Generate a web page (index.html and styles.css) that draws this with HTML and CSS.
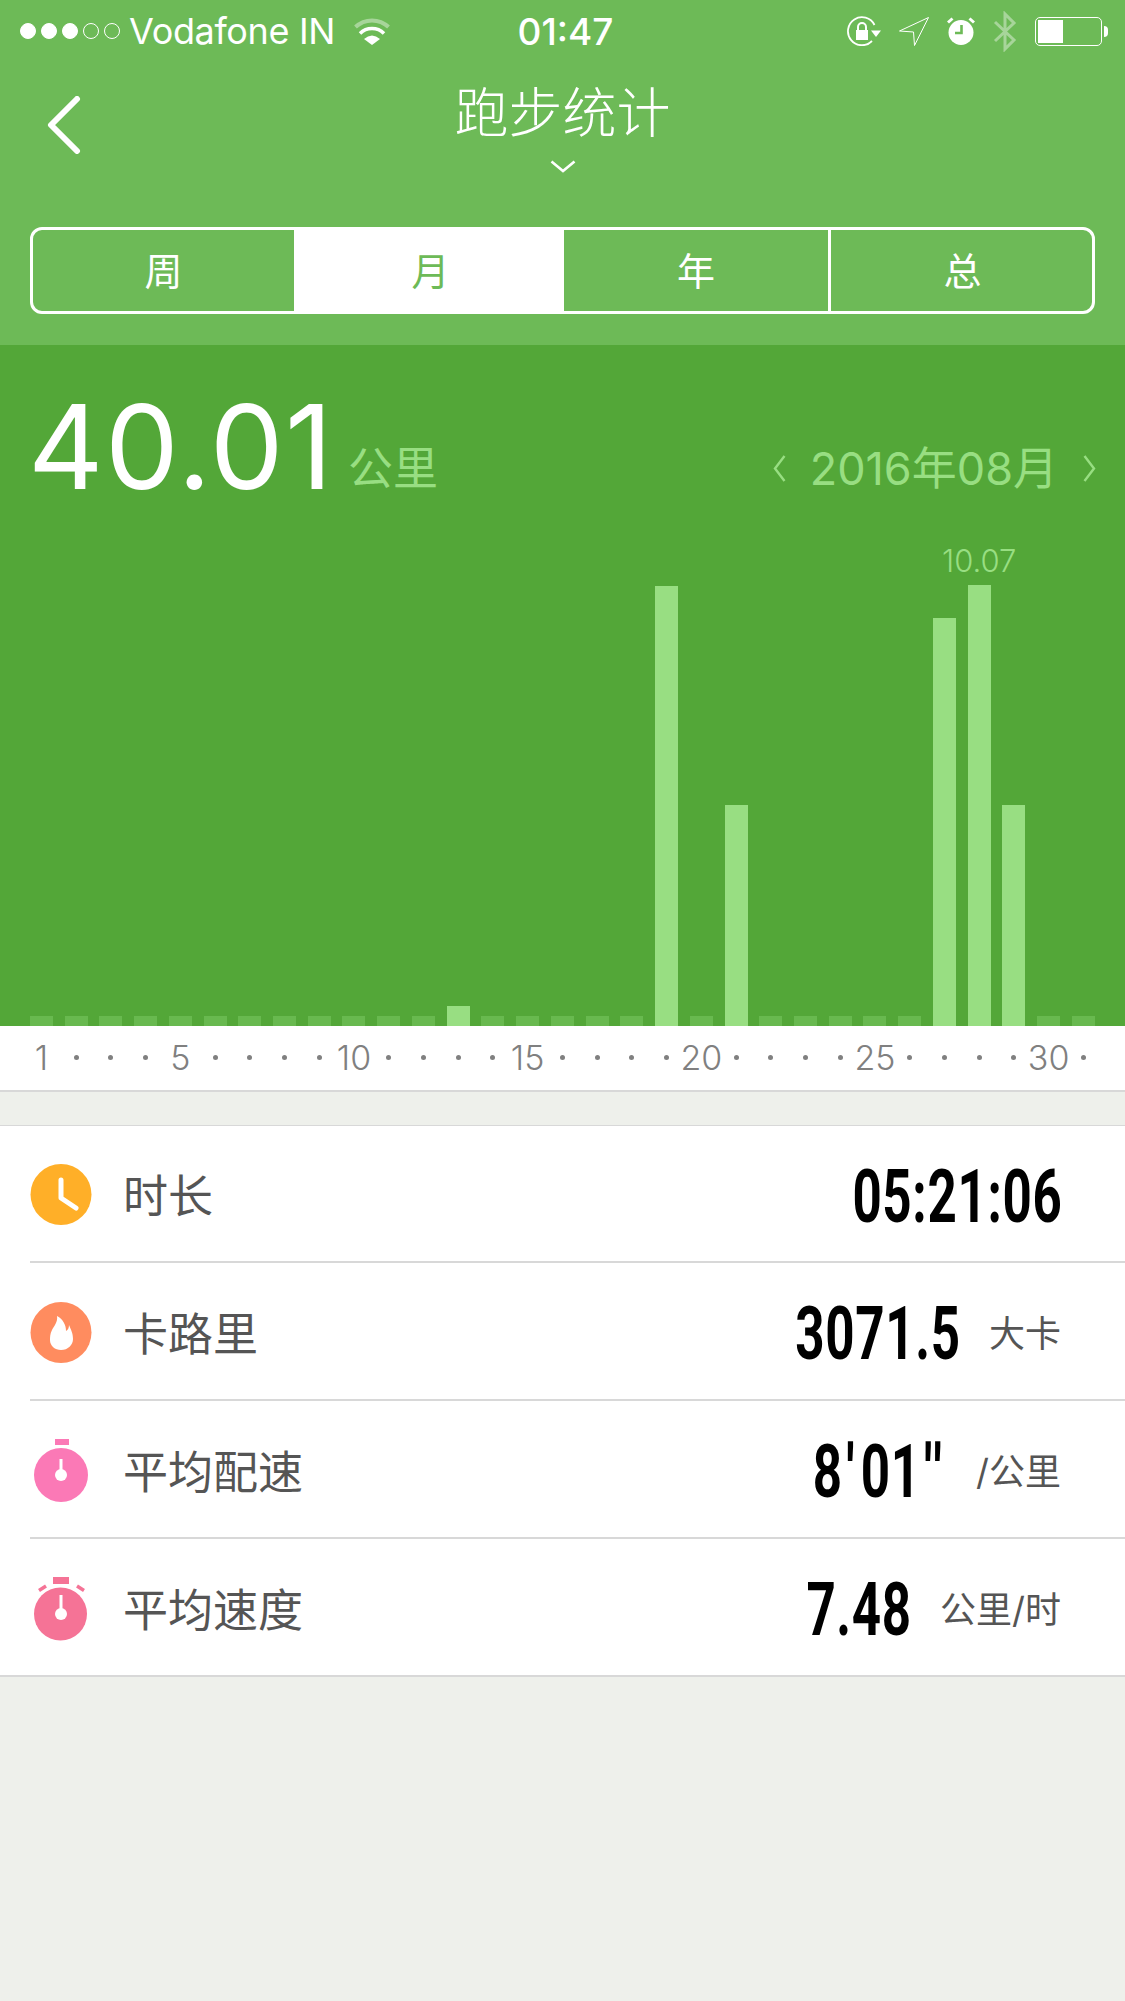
FILE: index.html
```html
<!DOCTYPE html>
<html lang="zh-CN">
<head>
  <meta charset="UTF-8">
  <meta name="viewport" content="width=device-width, initial-scale=1.0">
  <title>跑步统计</title>
  <link rel="stylesheet" href="styles.css">
</head>
<body>
  <header class="top">
    <div class="status-bar">
      <div class="status-left">
        <div class="signal">
          <span class="dot on"></span><span class="dot on"></span><span class="dot on"></span><span class="dot"></span><span class="dot"></span>
        </div>
        <span class="carrier">Vodafone IN</span>
        <svg class="wifi" width="36" height="27" viewBox="0 0 36 27">
          <path d="M1.5 9 A24 24 0 0 1 34.5 9" fill="none" stroke="#fff" stroke-width="4" opacity="0.4"/>
          <path d="M6 15.5 A17 17 0 0 1 30 15.5" fill="none" stroke="#fff" stroke-width="3.5"/>
          <path d="M10 21 Q18 14 26 21 L18 27 Z" fill="#fff"/>
        </svg>
      </div>
      <div class="time">01:47</div>
      <div class="status-right">
        <svg width="34" height="30" viewBox="0 0 34 30">
          <path d="M27.5 9 A14 14 0 1 0 25 25" fill="none" stroke="#fff" stroke-width="1.8"/>
          <path d="M24 14.5 L34 14.5 L29 21 Z" fill="#fff"/>
          <rect x="9" y="14" width="12" height="10" fill="#fff"/>
          <path d="M11 14 V11 A4 4 0 0 1 19 11 V14" fill="none" stroke="#fff" stroke-width="2"/>
        </svg>
        <svg width="30" height="29" viewBox="0 0 30 29">
          <path d="M29.5 0.5 L0.5 14 L14.5 15 L15.5 28.5 Z" fill="none" stroke="#fff" stroke-width="1"/>
        </svg>
        <svg width="28" height="28" viewBox="0 0 28 28">
          <circle cx="14" cy="15.5" r="12.5" fill="#fff"/>
          <path d="M1 5.5 L5.5 1.5 M27 5.5 L22.5 1.5" stroke="#fff" stroke-width="3"/>
          <path d="M14.5 8 V16 H8" fill="none" stroke="#6dba57" stroke-width="2.6"/>
        </svg>
        <svg width="24" height="41" viewBox="0 0 24 41">
          <path d="M2 11 L21 29 L12 38 V3 L21 12 L2 30" fill="none" stroke="#fff" stroke-width="3" opacity="0.4"/>
        </svg>
        <div class="battery-wrap">
          <div class="battery"><div class="battery-fill"></div></div>
          <div class="battery-tip"></div>
        </div>
      </div>
    </div>

    <div class="nav">
      <svg class="back" width="34" height="58" viewBox="0 0 34 58">
        <path d="M30 3 L4 29 L30 55" fill="none" stroke="#fff" stroke-width="6" stroke-linecap="round" stroke-linejoin="round"/>
      </svg>
      <div class="title-wrap">
        <h1 class="title">跑步统计</h1>
        <svg class="title-arrow" width="26" height="13" viewBox="0 0 26 13">
          <path d="M1.5 1.5 L13 11 L24.5 1.5" fill="none" stroke="#fff" stroke-width="2.6"/>
        </svg>
      </div>
    </div>

    <div class="seg">
      <div class="seg-item seg-week">周</div>
      <div class="seg-item seg-month active">月</div>
      <div class="seg-item seg-year">年</div>
      <div class="seg-item seg-all">总</div>
    </div>
  </header>

  <section class="chart">
    <div class="summary">
      <span class="total">40.01</span>
      <span class="total-unit">公里</span>
      <div class="period">
        <svg width="13" height="27" viewBox="0 0 13 27">
          <path d="M11.5 1 L2 13.5 L11.5 26" fill="none" stroke="#98de82" stroke-width="2.4"/>
        </svg>
        <span class="period-text">2016年08月</span>
        <svg width="13" height="27" viewBox="0 0 13 27">
          <path d="M1.5 1 L11 13.5 L1.5 26" fill="none" stroke="#98de82" stroke-width="2.4"/>
        </svg>
      </div>
    </div>
    <div class="bars">
      <div class="col"><div class="bar none"></div></div>
      <div class="col"><div class="bar none"></div></div>
      <div class="col"><div class="bar none"></div></div>
      <div class="col"><div class="bar none"></div></div>
      <div class="col"><div class="bar none"></div></div>
      <div class="col"><div class="bar none"></div></div>
      <div class="col"><div class="bar none"></div></div>
      <div class="col"><div class="bar none"></div></div>
      <div class="col"><div class="bar none"></div></div>
      <div class="col"><div class="bar none"></div></div>
      <div class="col"><div class="bar none"></div></div>
      <div class="col"><div class="bar none"></div></div>
      <div class="col"><div class="bar" style="height:20px"></div></div>
      <div class="col"><div class="bar none"></div></div>
      <div class="col"><div class="bar none"></div></div>
      <div class="col"><div class="bar none"></div></div>
      <div class="col"><div class="bar none"></div></div>
      <div class="col"><div class="bar none"></div></div>
      <div class="col"><div class="bar" style="height:440px"></div></div>
      <div class="col"><div class="bar none"></div></div>
      <div class="col"><div class="bar" style="height:221px"></div></div>
      <div class="col"><div class="bar none"></div></div>
      <div class="col"><div class="bar none"></div></div>
      <div class="col"><div class="bar none"></div></div>
      <div class="col"><div class="bar none"></div></div>
      <div class="col"><div class="bar none"></div></div>
      <div class="col"><div class="bar" style="height:408px"></div></div>
      <div class="col"><div class="bar" style="height:441px"><span class="bar-label">10.07</span></div></div>
      <div class="col"><div class="bar" style="height:221px"></div></div>
      <div class="col"><div class="bar none"></div></div>
      <div class="col"><div class="bar none"></div></div>
    </div>
  </section>

  <div class="axis">
    <div class="tick">1</div><div class="tick"><i></i></div><div class="tick"><i></i></div><div class="tick"><i></i></div>
    <div class="tick">5</div><div class="tick"><i></i></div><div class="tick"><i></i></div><div class="tick"><i></i></div><div class="tick"><i></i></div>
    <div class="tick">10</div><div class="tick"><i></i></div><div class="tick"><i></i></div><div class="tick"><i></i></div><div class="tick"><i></i></div>
    <div class="tick">15</div><div class="tick"><i></i></div><div class="tick"><i></i></div><div class="tick"><i></i></div><div class="tick"><i></i></div>
    <div class="tick">20</div><div class="tick"><i></i></div><div class="tick"><i></i></div><div class="tick"><i></i></div><div class="tick"><i></i></div>
    <div class="tick">25</div><div class="tick"><i></i></div><div class="tick"><i></i></div><div class="tick"><i></i></div><div class="tick"><i></i></div>
    <div class="tick">30</div><div class="tick"><i></i></div>
  </div>

  <div class="list">
    <div class="row">
      <svg class="row-icon" width="64" height="72" viewBox="0 0 64 72">
        <circle cx="31" cy="36.5" r="30.5" fill="#ffaf28"/>
        <path d="M31 22 V40 L46 50" fill="none" stroke="#fff" stroke-width="5" stroke-linecap="round" stroke-linejoin="round"/>
      </svg>
      <span class="row-label">时长</span>
      <span class="value">05:21:06</span>
    </div>
    <div class="row">
      <svg class="row-icon" width="64" height="72" viewBox="0 0 64 72">
        <circle cx="31" cy="37.5" r="30.5" fill="#ff8c5f"/>
        <path d="M27 21 C28 27 24 31 22 35 C20 39 20 42 20 45 C20 51 25 55 31 55 C38 55 43 50 43 44 C43 38 41 35 39 30 C39 33 38 35 36 36 C36 30 33 24 27 21 Z" fill="#fff"/>
      </svg>
      <span class="row-label">卡路里</span>
      <span class="value">3071.5</span>
      <span class="unit">大卡</span>
    </div>
    <div class="row">
      <svg class="row-icon" width="64" height="72" viewBox="0 0 64 72">
        <rect x="25" y="6" width="14" height="6" fill="#fb79b6"/>
        <circle cx="31" cy="42" r="27" fill="#fb79b6"/>
        <rect x="29.5" y="26" width="3" height="16" fill="#fff"/>
        <circle cx="31" cy="42" r="6" fill="#fff"/>
      </svg>
      <span class="row-label">平均配速</span>
      <span class="value">8<span class="prime">'</span>01<span class="prime">''</span></span>
      <span class="unit">/公里</span>
    </div>
    <div class="row">
      <svg class="row-icon" width="64" height="72" viewBox="0 0 64 72">
        <rect x="23" y="6" width="16" height="7" fill="#f57396"/>
        <path d="M9 19.5 L16 15 M47 15 L54 19.5" stroke="#f57396" stroke-width="3.5"/>
        <circle cx="30.5" cy="43" r="26.5" fill="#f57396"/>
        <rect x="29.5" y="24" width="3" height="19" fill="#fff"/>
        <circle cx="31" cy="43" r="6" fill="#fff"/>
      </svg>
      <span class="row-label">平均速度</span>
      <span class="value">7.48</span>
      <span class="unit">公里/时</span>
    </div>
  </div>
</body>
</html>
```

FILE: styles.css
```css
* {
  box-sizing: border-box;
}
body {
  margin: 0;
  min-height: 2001px;
  background-color: #eef0eb;
  font-family: Inter, "Noto Sans CJK SC", sans-serif;
  overflow-x: hidden;
}

/* top green part */
.top {
  height: 345px;
  background-color: #6dba57;
  color: white;
}
.status-bar {
  height: 60px;
  padding-top: 2px;
  display: grid;
  grid-template-columns: 1fr auto 1fr;
  align-items: center;
  font-size: 36px;
}
.status-left {
  display: flex;
  align-items: center;
  padding-left: 20px;
}
.signal {
  display: flex;
  gap: 5px;
}
.dot {
  width: 16px;
  height: 16px;
  border-radius: 50%;
  border: 1px solid white;
}
.dot.on {
  background-color: white;
}
.carrier {
  margin-left: 9px;
  letter-spacing: -0.35px;
}
.wifi {
  margin-left: 19px;
}
.time {
  font-size: 37px;
  font-weight: 500;
  padding-left: 6px;
}
.status-right {
  display: flex;
  align-items: center;
  justify-content: flex-end;
  gap: 18px;
  padding-right: 17px;
}
.battery-wrap {
  display: flex;
  align-items: center;
  gap: 2px;
}
.battery {
  width: 67px;
  height: 29px;
  border: 1px solid white;
  border-radius: 5px;
  padding: 2px;
}
.battery-fill {
  width: 25px;
  height: 100%;
  background-color: white;
}
.battery-tip {
  width: 4px;
  height: 11px;
  background-color: white;
  border-radius: 0 4px 4px 0;
}

.nav {
  display: grid;
  grid-template-columns: 1fr auto 1fr;
  margin-top: 27px;
  padding-left: 47px;
}
.back {
  margin-top: 9px;
}
.title-wrap {
  display: flex;
  flex-direction: column;
  align-items: center;
}
.title {
  margin: 0;
  font-size: 54px;
  line-height: 54px;
  font-weight: 300;
  margin-left: -47px;
}
.title-arrow {
  margin-top: 19px;
  margin-left: -47px;
}

.seg {
  display: flex;
  height: 87px;
  margin: 54px 30px 0 30px;
  border: 3px solid white;
  border-radius: 12px;
  overflow: hidden;
  font-size: 38px;
}
.seg-item {
  display: flex;
  align-items: center;
  justify-content: center;
  padding-bottom: 5px;
}
.seg-week {
  flex: 0 0 261px;
}
.seg-month {
  flex: 0 0 270px;
  padding-left: 3px;
}
.seg-year {
  flex: 0 0 267px;
  border-right: 3px solid white;
}
.seg-all {
  flex: 1;
  padding-left: 2px;
}
.seg-item.active {
  background-color: white;
  color: #6dba57;
}

/* chart */
.chart {
  height: 681px;
  background-color: #53a738;
  display: flex;
  flex-direction: column;
}
.summary {
  display: flex;
  align-items: flex-end;
  padding: 44px 29px 0 28px;
  color: #98de82;
}
.total {
  font-size: 117px;
  line-height: 115px;
  font-weight: 400;
  letter-spacing: 1.5px;
  color: white;
}
.total-unit {
  font-size: 45px;
  line-height: 45px;
  margin: 0 0 13px 14px;
}
.period {
  display: flex;
  align-items: center;
  margin: 0 0 13px auto;
  font-size: 45px;
  line-height: 45px;
}
.period-text {
  margin: 0 25px 0 24px;
}
.bars {
  flex: 1;
  display: flex;
  align-items: flex-end;
  padding: 0 24px;
}
.col {
  flex: 1 1 0;
  display: flex;
  justify-content: center;
}
.bar {
  position: relative;
  width: 23px;
  background-color: #98de82;
}
.bar.none {
  height: 10px;
  background-color: #68b94f;
}
.bar-label {
  position: absolute;
  bottom: 100%;
  left: 50%;
  transform: translateX(-50%);
  margin-bottom: 7px;
  font-size: 31px;
  line-height: 34px;
  font-weight: 300;
  color: #98de82;
}

/* axis under the chart */
.axis {
  display: flex;
  height: 66px;
  padding: 0 24px 2px 24px;
  background-color: white;
  border-bottom: 2px solid #d8d8d8;
  color: #808080;
  font-size: 34px;
  font-weight: 300;
}
.tick {
  flex: 1 1 0;
  min-width: 0;
  display: flex;
  align-items: center;
  justify-content: center;
  white-space: nowrap;
}
.tick i {
  width: 5px;
  height: 5px;
  border-radius: 50%;
  background-color: #808080;
}

/* list of numbers */
.list {
  margin-top: 33px;
  background-color: white;
  border-top: 1px solid #d8d8d8;
}
.row {
  display: flex;
  align-items: center;
  height: 138px;
  margin-left: 30px;
  padding-right: 64px;
  border-bottom: 2px solid #d8d8d8;
}
.row:first-child {
  height: 137px;
}
.row:last-child {
  margin-left: 0;
  padding-left: 30px;
}
.row-label {
  margin-left: 29px;
  font-size: 45px;
  color: #555;
}
.value {
  display: inline-block;
  margin: 0 -1px 0 auto;
  padding-top: 6px;
  font-family: Roboto, sans-serif;
  font-size: 74px;
  line-height: 74px;
  font-weight: 700;
  letter-spacing: 1px;
  color: black;
  white-space: nowrap;
  transform: scaleX(0.69);
  transform-origin: right center;
}
.prime {
  margin: 0 5px;
  letter-spacing: 4px;
}
.unit {
  margin-left: 29px;
  font-size: 36px;
  color: #555;
}
```
